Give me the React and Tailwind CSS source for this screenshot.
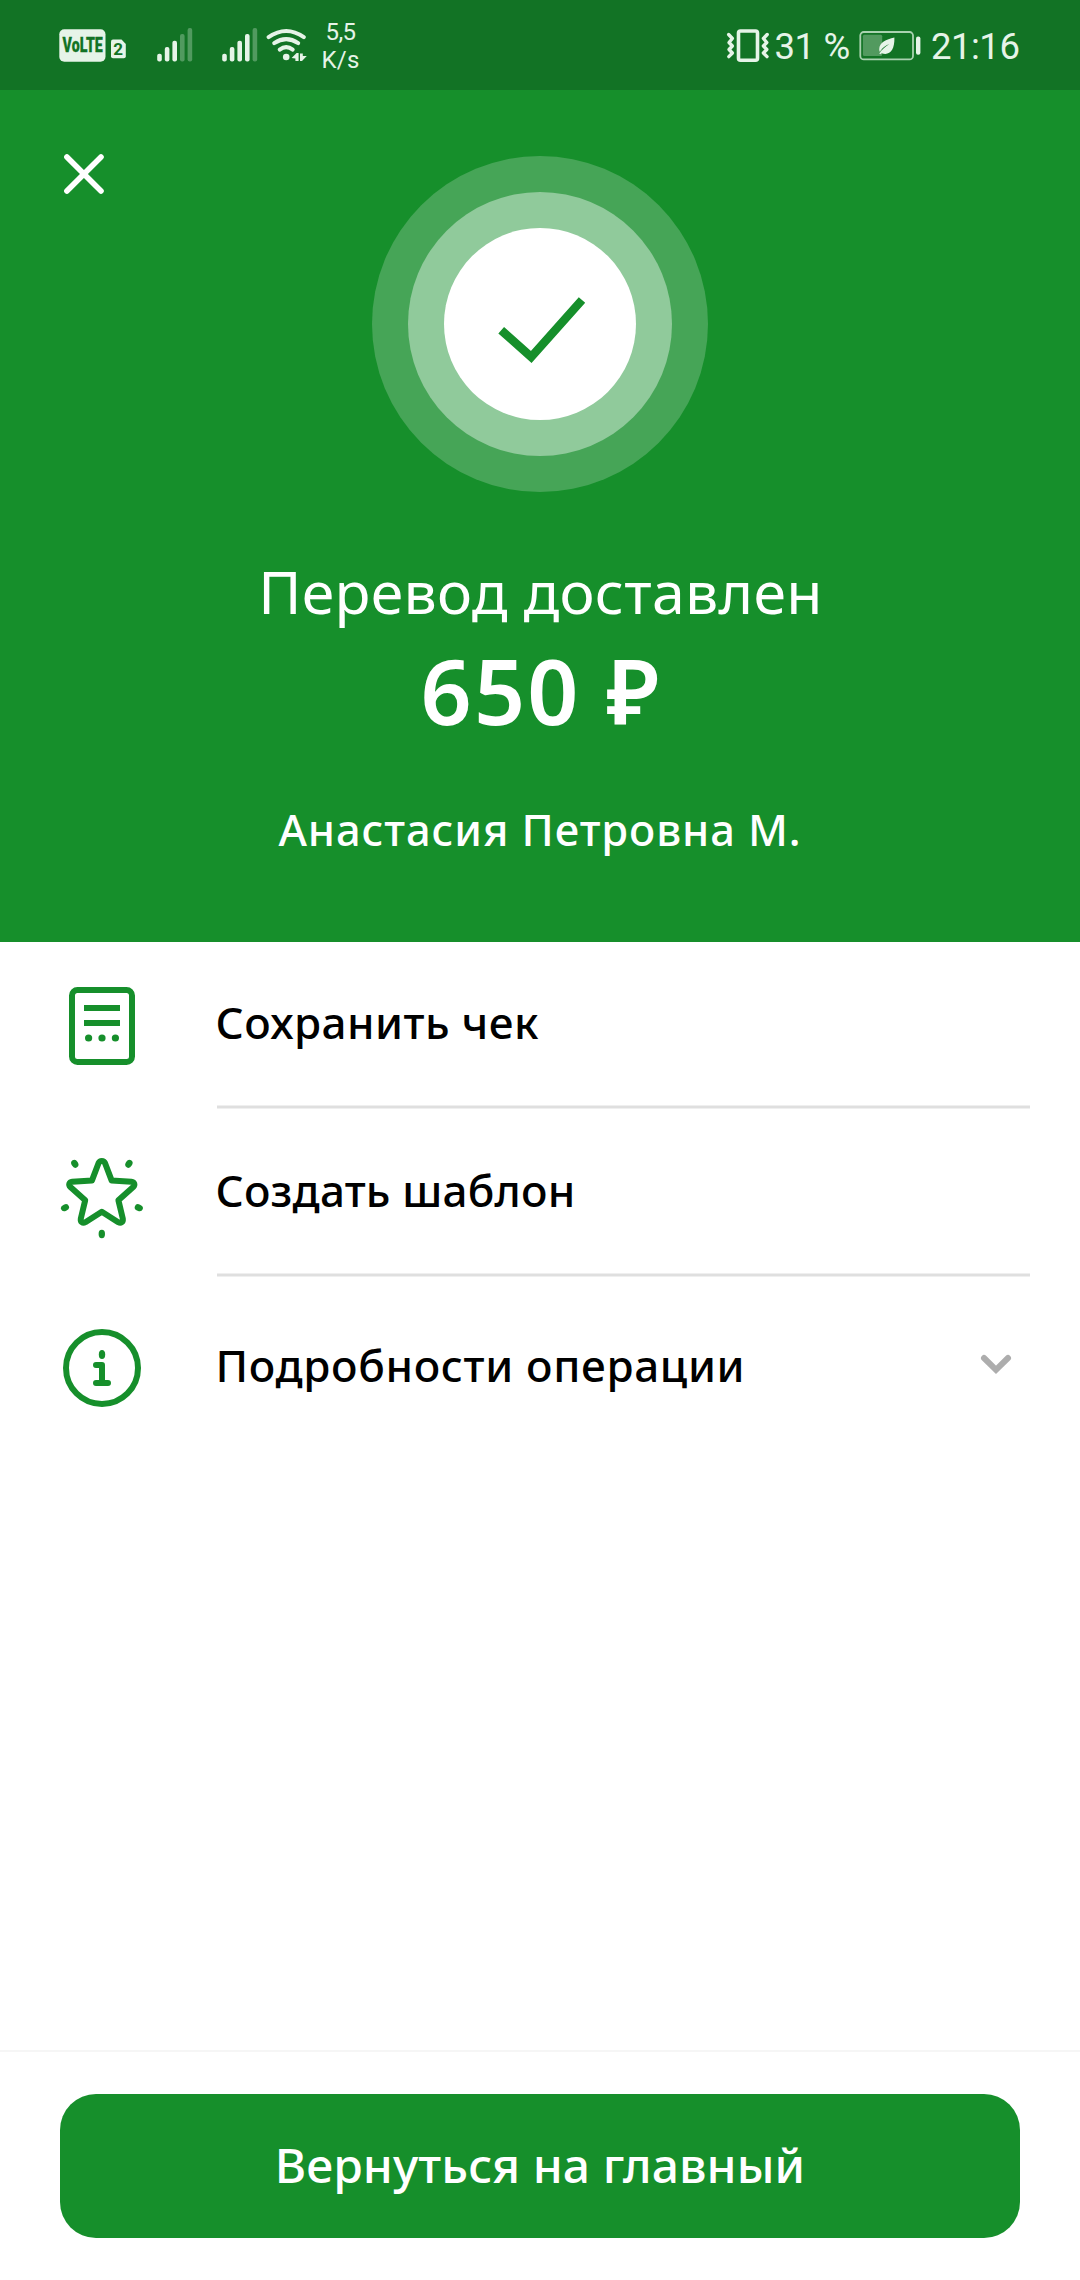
const GREEN = "#168f2b";

function SignalBars({ dim }) {
  const tops = [53.7, 47, 40.7, 34, 28];
  return (
    <svg className="h-[34px] w-[36px]" viewBox="0 28 36 34" fill="#e6f4e8">
      {tops.map((t, i) => (
        <rect key={i} x={0.2 + i * 7.6} y={t} width="4.6" height={61.4 - t} rx="2" opacity={i >= 5 - dim ? 0.3 : 1} />
      ))}
    </svg>
  );
}

function VolteBadge() {
  return (
    <svg className="h-[34px] w-[68px]" viewBox="59 29 68 34">
      <rect x="59.3" y="29.3" width="46.2" height="32.5" rx="5" fill="#e6f4e8" />
      <text
        x="62.6" y="52.3" textLength="40.2" lengthAdjust="spacingAndGlyphs"
        fontFamily="Roboto, sans-serif" fontWeight="900" fontSize="20" fill="#127325" stroke="#127325" strokeWidth="0.3"
      >
        VoLTE
      </text>
      <path d="M113 39.5h8.5l4.3 4.5v12.2a2 2 0 0 1-2 2H113a2 2 0 0 1-2-2V41.5a2 2 0 0 1 2-2z" fill="#e6f4e8" />
      <text x="118.2" y="55.3" textAnchor="middle" fontFamily="Roboto, sans-serif" fontWeight="700" fontSize="17" fill="#127325">
        2
      </text>
    </svg>
  );
}

function WifiIcon() {
  return (
    <svg className="h-[34px] w-[41px]" viewBox="266 28 41 34" fill="none" stroke="#e6f4e8" strokeWidth="4" strokeLinecap="round">
      <path d="M268.6 37.2Q286.2 24.8 303.8 37.2" />
      <path d="M274.2 43.2Q286.2 35 298.2 43.2" />
      <path d="M279.7 49.6Q286.2 44.6 292.7 49.6" />
      <circle cx="286.2" cy="57" r="3.3" fill="#e6f4e8" stroke="none" />
      <path d="M291.6 58L296.6 53H298.6V61H295.4V58.6zM300 53.6H302.8V56H306.8L302 61H300z" fill="#e6f4e8" stroke="none" />
    </svg>
  );
}

function VibrateIcon() {
  return (
    <svg className="h-[34px] w-[44px]" viewBox="726 29 44 34" fill="none" stroke="#e6f4e8" strokeWidth="3.4" strokeLinejoin="round" strokeLinecap="round">
      <rect x="738.5" y="31" width="19" height="29.3" rx="2" strokeWidth="3.6" />
      <path d="M728.6 34.5L732.4 38.5L729 42.5L732.4 46L729 49.5L732.4 53L728.8 56.6" />
      <path d="M767.2 34.5L763.4 38.5L766.8 42.5L763.4 46L766.8 49.5L763.4 53L767 56.6" />
    </svg>
  );
}

function BatteryIcon() {
  return (
    <svg className="h-[30px] w-[62px]" viewBox="859 31 62 30">
      <rect x="860.3" y="32" width="52.7" height="27.4" rx="3.5" fill="none" stroke="#a9d2b0" strokeWidth="1.8" />
      <rect x="862.9" y="34.7" width="19.3" height="21.4" rx="1.5" fill="#529a5f" />
      <path d="M894.4 37.6C886 39.8 879.4 42.4 879.2 49.2C879.2 50.2 879.4 51 879.8 51.8C882.2 47.8 885.6 45.6 889.4 44C885.4 46.8 881.8 49.2 879.3 53.6L880.3 54.2L881.6 53.2C889.4 56 894.8 50.6 894.4 37.6z" fill="#e6f4e8" />
      <rect x="916" y="36.5" width="4.4" height="18.2" rx="2" fill="#e6f4e8" />
    </svg>
  );
}

function StatusBar() {
  return (
    <div className="flex h-[90px] items-start bg-[#127325] font-['Roboto',sans-serif] text-[#e6f4e8]">
      <div className="mt-[29px] ml-[59px] flex"><VolteBadge /></div>
      <div className="mt-[28px] ml-[30px] flex"><SignalBars dim={2} /></div>
      <div className="mt-[28px] ml-[29px] flex"><SignalBars dim={1} /></div>
      <div className="mt-[28px] ml-[8px] flex"><WifiIcon /></div>
      <div className="mt-[17.5px] ml-[13.5px] w-[40px] text-center text-[24px] leading-[28px]">
        <div className="tracking-[-0.6px]">5,5</div>
        <div className="tracking-[0.2px]">K/s</div>
      </div>
      <div className="mt-[29px] ml-[365.5px] flex"><VibrateIcon /></div>
      <div className="mt-[22px] ml-[4.5px] w-[79.5px] text-[36.5px] leading-[50px] tracking-[-0.4px] whitespace-nowrap">31 %</div>
      <div className="mt-[31px] ml-[5px] flex"><BatteryIcon /></div>
      <div className="mt-[22px] ml-[10px] text-[36.5px] leading-[50px] tracking-[-0.5px]">21:16</div>
    </div>
  );
}

function ReceiptIcon() {
  return (
    <svg className="h-[88px] w-[84px]" viewBox="60 982 84 88" fill={GREEN}>
      <rect x="72" y="990" width="60" height="72" rx="5.5" fill="none" stroke={GREEN} strokeWidth="6" />
      <rect x="84" y="1005" width="36" height="6" />
      <rect x="84" y="1020" width="36" height="6" />
      <circle cx="88.6" cy="1038" r="3.6" />
      <circle cx="102" cy="1038" r="3.6" />
      <circle cx="115.4" cy="1038" r="3.6" />
    </svg>
  );
}

function StarIcon() {
  return (
    <svg className="h-[88px] w-[84px]" viewBox="60 1152 84 88" fill={GREEN}>
      <path
        d="M98.6 1163C99.8 1160.3 103.8 1160.3 105 1163L111.6 1180.4L131.4 1181.7C134.5 1182 135.3 1185 133.2 1187L118.4 1200.2L122.8 1218.6C123.3 1221.8 121 1223.7 118.2 1222.2L101.8 1211.8L85.4 1222.2C82.6 1223.7 80.3 1221.8 80.8 1218.6L85.2 1200.2L70.4 1187C68.3 1185 69.1 1182 72.2 1181.7L92 1180.4z"
        fill="none" stroke={GREEN} strokeWidth="6" strokeLinejoin="round"
      />
      <ellipse cx="74.8" cy="1163.8" rx="3.3" ry="4.2" transform="rotate(-32 74.8 1163.8)" />
      <ellipse cx="128.9" cy="1163.8" rx="3.3" ry="4.2" transform="rotate(32 128.9 1163.8)" />
      <ellipse cx="65" cy="1207.7" rx="4.2" ry="3.3" transform="rotate(-22 65 1207.7)" />
      <ellipse cx="138.8" cy="1207.7" rx="4.2" ry="3.3" transform="rotate(22 138.8 1207.7)" />
      <ellipse cx="101.8" cy="1234" rx="3.2" ry="4.2" />
    </svg>
  );
}

function InfoIcon() {
  return (
    <svg className="h-[88px] w-[84px]" viewBox="60 1324 84 88" fill="none" stroke={GREEN} strokeWidth="6" strokeLinecap="round" strokeLinejoin="round">
      <circle cx="102" cy="1368" r="36" />
      <ellipse cx="102" cy="1354.4" rx="3.2" ry="4.5" fill={GREEN} stroke="none" />
      <path d="M96 1365H102V1383M96 1383H108" />
    </svg>
  );
}

function Row({ icon, iconClass, label, labelClass, children }) {
  return (
    <div className="flex items-start pl-[60px]">
      <div className={iconClass}>{icon}</div>
      <div className={labelClass}>{label}</div>
      {children}
    </div>
  );
}

export default function App() {
  return (
    <div className="flex h-[2280px] w-[1080px] flex-col overflow-hidden bg-white font-['Noto_Sans','Open_Sans',sans-serif] text-black">
      <StatusBar />

      <header className="relative flex h-[852px] flex-col items-center bg-[#168f2b] pt-[66px] text-white">
        <button aria-label="Закрыть" className="absolute top-[62px] left-[62px]">
          <svg className="h-[44px] w-[44px]" viewBox="62 152 44 44" stroke="#fff" strokeWidth="5.6" strokeLinecap="round">
            <path d="M66.9 156.9L101 191M101 156.9L66.9 191" />
          </svg>
        </button>
        <div className="flex size-[336px] items-center justify-center rounded-full bg-[#46a557]">
          <div className="flex size-[264px] items-center justify-center rounded-full bg-[#90ca9b]">
            <div className="flex size-[192px] items-center justify-center rounded-full bg-white">
              <svg className="size-[192px]" viewBox="444 228 192 192" fill="none" stroke={GREEN} strokeWidth="8.6">
                <path d="M501.2 330.2L531.2 357L582 300" />
              </svg>
            </div>
          </div>
        </div>
        <div className="mt-[59px] pl-[1px] text-[59px] leading-[80px] tracking-[0.27px]">Перевод доставлен</div>
        <div className="mt-[9px] pl-[2px] text-[89.5px] leading-[100px] font-semibold tracking-[2.2px]">650 ₽</div>
        <div className="mt-[59px] text-[43.5px] leading-[60px] font-medium tracking-[0.92px]">Анастасия Петровна М.</div>
      </header>

      <main className="flex flex-1 flex-col">
        <Row
          icon={<ReceiptIcon />} iconClass="mt-[40px] h-[123px] w-[155.5px]"
          label="Сохранить чек" labelClass="mt-[50px] text-[44px] leading-[60px] font-medium tracking-[0.45px]"
        />
        <div className="mr-[50px] ml-[217px] h-[4px] border-y border-[#efefef] bg-[#dfdfdf]" />
        <Row
          icon={<StarIcon />} iconClass="mt-[43px] h-[121px] w-[155.5px]"
          label="Создать шаблон" labelClass="mt-[51px] text-[44px] leading-[60px] font-medium tracking-[0.2px]"
        />
        <div className="mr-[50px] ml-[217px] h-[4px] border-y border-[#efefef] bg-[#dfdfdf]" />
        <Row
          icon={<InfoIcon />} iconClass="mt-[47px] w-[155.5px]"
          label="Подробности операции" labelClass="mt-[58px] text-[44px] leading-[60px] font-medium tracking-[0.66px]"
        >
          <svg className="mt-[73px] mr-[66px] ml-auto h-[30px] w-[36px]" viewBox="978 1350 36 30" fill="none" stroke="#adadad" strokeWidth="6" strokeLinecap="round">
            <path d="M984 1358L996 1369.8L1008 1358" />
          </svg>
        </Row>
      </main>

      <footer className="h-[230px]">
        <div className="h-[2px] bg-[#f6f6f6]" />
        <div className="px-[60px] pt-[42px]">
          <button className="block h-[144px] w-full rounded-[36px] bg-[#168f2b] pt-[41px] pb-[43px] text-center text-[48px] leading-[60px] font-medium tracking-[0.08px] text-white">
            Вернуться на главный
          </button>
        </div>
      </footer>
    </div>
  );
}
